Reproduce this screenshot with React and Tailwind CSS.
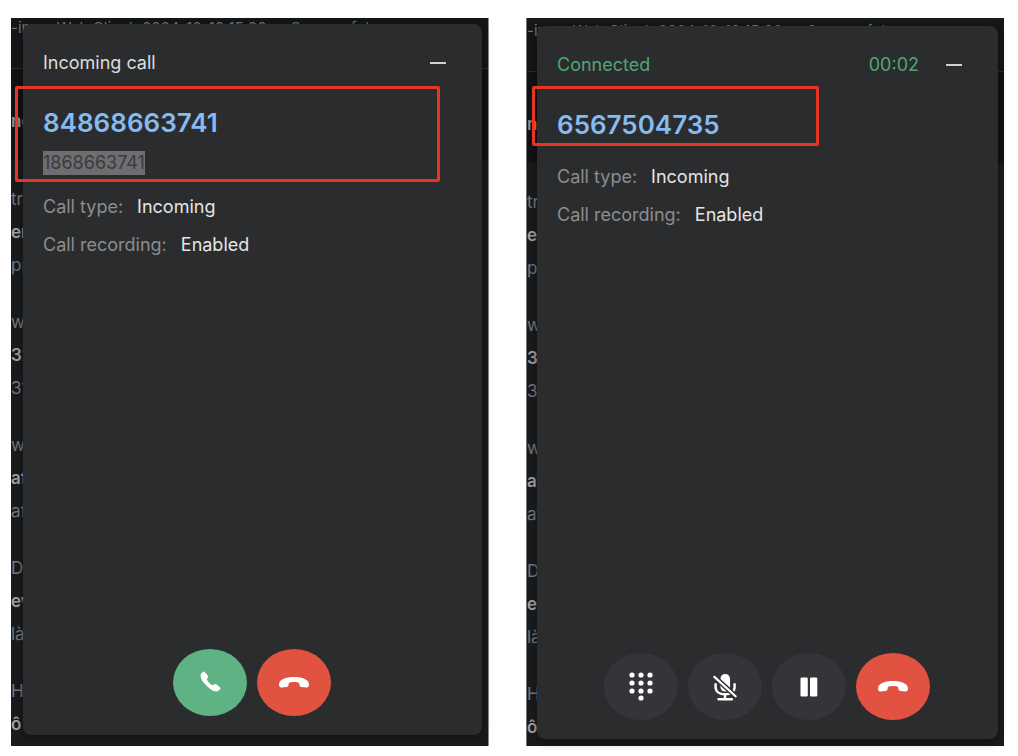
import clsx from 'clsx';

const feed = [
  ['tr', 'er', 'pp'],
  ['w', '32', '31'],
  ['w', 'af', 'aft'],
  ['D', 'ev', 'là'],
  ['H', 'ô', ''],
];

function Handset({ className }) {
  return (
    <svg viewBox="0 0 30 11" preserveAspectRatio="none" fill="currentColor" className={className} aria-hidden="true">
      <path d="M0 7.6C0 2.6 6.6 0 15 0s15 2.6 15 7.6c0 2-.8 3-2.6 2.8l-4.6-.5c-1.6-.2-2.4-1-2.4-2.4 0-1.2-.4-1.9-1.4-2.1-2.4-.5-5.6-.5-8 0-1 .2-1.4.9-1.4 2.1 0 1.4-.8 2.2-2.4 2.4l-4.6.5C.8 10.6 0 9.6 0 7.6Z" />
    </svg>
  );
}

function Dialpad() {
  const dots = [[3, 4], [12, 4], [21, 4], [3, 12], [12, 12], [21, 12], [3, 20], [12, 20], [21, 20], [12, 27]];
  return (
    <svg viewBox="0 0 24 32" fill="currentColor" className="w-6 h-8" aria-hidden="true">
      {dots.map(([x, y]) => <circle key={`${x}-${y}`} cx={x} cy={y} r="2.6" />)}
    </svg>
  );
}

function MicOff() {
  return (
    <svg viewBox="0 0 26 30" fill="none" className="w-6 h-7" aria-hidden="true">
      <rect x="8" y="1" width="10.5" height="19" rx="5.2" fill="currentColor" />
      <path d="M2.8 12v3c0 5 4 8 10.3 8s10.3-3 10.3-8v-3" stroke="currentColor" strokeWidth="2.6" strokeLinecap="round" />
      <path d="M13 23v5M6 28.2h14.5" stroke="currentColor" strokeWidth="2.6" strokeLinecap="round" />
      <path d="M1.5 4 24.5 25" stroke="#343538" strokeWidth="5.5" />
      <path d="M1.5 4 24.5 25" stroke="currentColor" strokeWidth="2.4" strokeLinecap="round" />
    </svg>
  );
}

function Pause() {
  return (
    <svg viewBox="0 0 18 20" fill="currentColor" className="w-[18px] h-5" aria-hidden="true">
      <rect x="0.5" y="0.5" width="7.3" height="19" rx="1.2" />
      <rect x="10" y="0.5" width="7.3" height="19" rx="1.2" />
    </svg>
  );
}

const tones = {
  accept: 'bg-[#5fb284] hover:bg-[#6cbd90]',
  decline: 'bg-[#e25241] hover:bg-[#ea6252]',
  neutral: 'bg-[#343538] hover:bg-[#3e3f43]',
};

function RoundButton({ label, tone, children }) {
  return (
    <button type="button" aria-label={label}
      className={clsx('w-[74px] h-[67px] rounded-[50%] flex items-center justify-center text-white', tones[tone])}>
      {children}
    </button>
  );
}

// Page that stays visible behind the call window
function Backdrop({ className }) {
  return (
    <div aria-hidden="true" className={clsx('absolute inset-0 overflow-hidden flex flex-col bg-[#1a1b1d] text-[17px] leading-6 text-[#77787a]', className)}>
      <div className="bg-[#151618]">
        <div className="h-[51px] whitespace-nowrap border-b border-[#2b2c2e] text-[15px] leading-5">
          -in on Web Client: 2024-10-10 15:20 <span className="ml-5 text-[#3d8a5c]">Successful</span>
        </div>
        <div className="h-[91px] pt-10 bg-[#111214] font-semibold text-[#8f9092]">no</div>
      </div>
      <div className="pt-[27px] flex flex-col gap-6">
        {feed.map(([top, title, note], i) => (
          <div key={i} className="h-[99px] flex flex-col gap-[9px]">
            <span>{top}</span>
            <span className="font-semibold text-[#a0a1a3]">{title}</span>
            <span>{note}</span>
          </div>
        ))}
      </div>
    </div>
  );
}

function CallCard({ status, connected, timer, number, altNumber, children }) {
  return (
    <section className="relative flex-1 flex flex-col rounded-lg bg-[#2b2c2e] pt-[27px] pb-[19px] pl-5 pr-9 shadow-[0_2px_10px_rgba(0,0,0,0.4)]">
      <header className={clsx('flex items-center', connected ? 'text-[#4fa673]' : 'text-[#dcdddf]')}>
        <h2 className="flex-1">{status}</h2>
        {timer && <time className="mr-[27px]">{timer}</time>}
        <button type="button" aria-label="Minimize" className="h-6 w-4 flex items-center">
          <span className="w-4 h-[2px] bg-[#d0d1d3]" />
        </button>
      </header>

      <div className="mt-8 text-[26px] leading-8 font-semibold text-[#84bbf0]">{number}</div>
      {altNumber && (
        <div className="mt-3 mb-5">
          <span className="inline-block bg-[#6d6e70] text-[#3a3b3d]">{altNumber}</span>
        </div>
      )}

      <dl className={clsx('flex flex-col gap-[14px]', !altNumber && 'mt-6')}>
        <div className="flex gap-[14px]">
          <dt className="text-[#8c8d8f]">Call type:</dt>
          <dd className="text-[#e4e5e7]">Incoming</dd>
        </div>
        <div className="flex gap-[14px]">
          <dt className="text-[#8c8d8f]">Call recording:</dt>
          <dd className="text-[#e4e5e7]">Enabled</dd>
        </div>
      </dl>

      <div className="mt-auto -mr-[14px] flex justify-center gap-[10px]">{children}</div>

      {/* red marker round the caller number */}
      <div className={clsx('absolute border-[3px] border-[#e93323] rounded-[2px] pointer-events-none',
        altNumber ? '-left-2 right-[42px] top-[62px] h-24' : '-left-[5px] right-[179px] top-[60px] h-[60px]')} />
    </section>
  );
}

export default function App() {
  return (
    <main className="min-h-screen bg-white grid grid-cols-2 gap-[37px] pt-[18px] pb-[10px] pl-[11px] pr-[14px] font-['Inter','Liberation_Sans',sans-serif] text-[18px] leading-6">
      <div className="relative flex flex-col pt-[6px] pb-[11px] pl-3 pr-[7px]">
        <Backdrop className="border-r border-[#8a8b8d]" />
        <CallCard status="Incoming call" number="84868663741" altNumber="1868663741">
          <RoundButton label="Answer" tone="accept"><Handset className="w-[25px] h-[9px] rotate-[-135deg]" /></RoundButton>
          <RoundButton label="Decline" tone="decline"><Handset className="w-[30px] h-[11px]" /></RoundButton>
        </CallCard>
      </div>

      <div className="relative flex flex-col pt-2 pb-[7px] pl-[11px] pr-[6px]">
        <Backdrop className="border-l border-[#6f7072] pt-[3px]" />
        <CallCard status="Connected" connected timer="00:02" number="6567504735">
          <RoundButton label="Dialpad" tone="neutral"><Dialpad /></RoundButton>
          <RoundButton label="Mute" tone="neutral"><MicOff /></RoundButton>
          <RoundButton label="Hold" tone="neutral"><Pause /></RoundButton>
          <RoundButton label="Hang up" tone="decline"><Handset className="w-[30px] h-[11px]" /></RoundButton>
        </CallCard>
      </div>
    </main>
  );
}
